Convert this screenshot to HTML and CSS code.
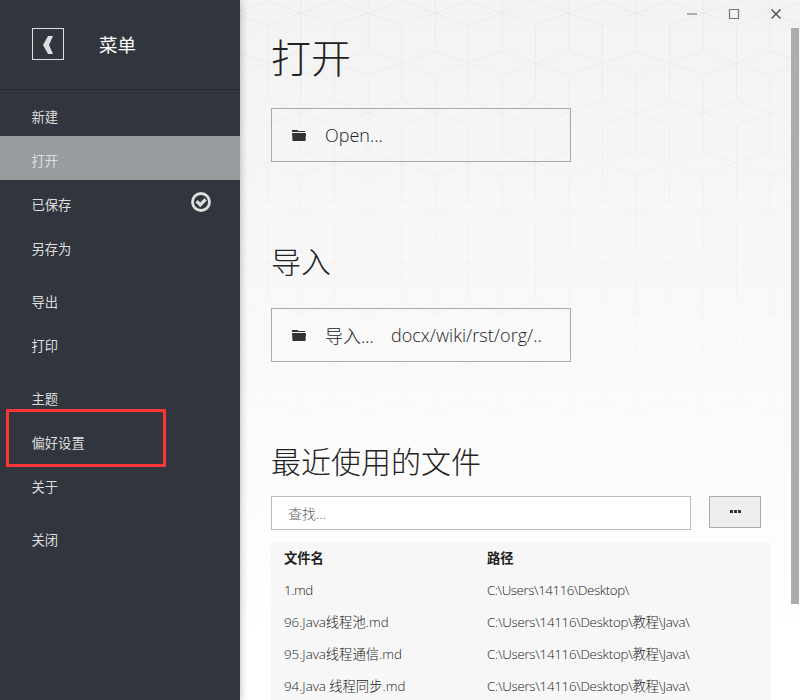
FILE: index.html
```
<!DOCTYPE html>
<html lang="zh-CN">
<head>
    <meta charset="UTF-8">
    <meta name="viewport" content="width=device-width, initial-scale=1.0">
    <title>打开</title>
    <link rel="stylesheet" href="styles.css">
</head>
<body>
    <div class="app">
        <nav class="sidebar">
            <div class="sidebar-header">
                <button class="back" aria-label="返回">
                    <svg width="30" height="30" viewBox="0 0 30 30"><path d="M15 7h5l-4 9 4 9h-5L10 16z" fill="#dedede"/></svg>
                </button>
                <span class="sidebar-title">菜单</span>
            </div>
            <ul class="menu">
                <li>新建</li>
                <li class="active">打开</li>
                <li>已保存
                    <svg class="saved" width="20" height="20" viewBox="0 0 20 20" fill="none" stroke="#dedede">
                        <circle cx="10" cy="10" r="8.500" stroke-width="2.800"/>
                        <path d="M5.600 9.200l3.600 3.600 5.400-5.400" stroke-width="3.300"/>
                    </svg>
                </li>
                <li>另存为</li>
                <li class="divider"></li>
                <li>导出</li>
                <li>打印</li>
                <li class="divider"></li>
                <li>主题</li>
                <li>偏好设置</li>
                <li>关于</li>
                <li class="divider"></li>
                <li>关闭</li>
            </ul>
            <div class="highlight"></div>
        </nav>

        <main class="content">
            <!-- cube pattern behind the page -->
            <svg class="pattern" width="560" height="700">
                <defs>
                    <pattern id="cubes" x="-6" y="0" width="67" height="100" patternUnits="userSpaceOnUse">
                        <path d="M0 13L33.500 1 67 13 33.500 25zM0 51L33.500 63 0 75M67 51L33.500 63 67 75M33.500 25V63M33.500 63V100M0 13V51M67 13V51M0 75V100M67 75V100M0 0V13M67 0V13" fill="none" stroke="#eaeaea" stroke-width="1"/>
                    </pattern>
                    <linearGradient id="fade" x1="0" y1="0" x2="0" y2="1">
                        <stop offset="0" stop-color="#fff" stop-opacity="0"/>
                        <stop offset="0.900" stop-color="#fff"/>
                    </linearGradient>
                </defs>
                <rect width="560" height="700" fill="#f3f3f3"/>
                <rect width="560" height="700" fill="url(#cubes)"/>
                <rect width="560" height="700" fill="url(#fade)"/>
            </svg>

            <div class="window-controls">
                <svg width="12" height="12" viewBox="0 0 12 12"><path d="M1 6h10" stroke="#888" stroke-width="1.300"/></svg>
                <svg width="12" height="12" viewBox="0 0 12 12"><path d="M1.500 1.500h9v9h-9z" fill="none" stroke="#777" stroke-width="1.200"/></svg>
                <svg width="12" height="12" viewBox="0 0 12 12"><path d="M1.500 1.500l9 9M10.500 1.500l-9 9" stroke="#444" stroke-width="1.300"/></svg>
            </div>

            <div class="panel">
                <h1>打开</h1>
                <button class="open-button">
                    <svg width="14" height="12" viewBox="0 0 14 12"><path d="M0 1h5.500l1 1H13v1H0zM0 4h14l-.5 8H.5z" fill="#333"/></svg>
                    <span>Open...</span>
                </button>

                <h2>导入</h2>
                <button class="open-button">
                    <svg width="14" height="12" viewBox="0 0 14 12"><path d="M0 1h5.500l1 1H13v1H0zM0 4h14l-.5 8H.5z" fill="#333"/></svg>
                    <span>导入...</span>
                    <span class="formats">docx/wiki/rst/org/..</span>
                </button>

                <h2>最近使用的文件</h2>
                <div class="search-row">
                    <input type="text" placeholder="查找...">
                    <button class="more" aria-label="更多">
                        <svg width="11" height="3" viewBox="0 0 11 3"><path d="M0 0h3v3H0zM4 0h3v3H4zM8 0h3v3H8z" fill="#333"/></svg>
                    </button>
                </div>

                <table class="files">
                    <thead>
                        <tr><th>文件名</th><th>路径</th></tr>
                    </thead>
                    <tbody>
                        <tr><td>1.md</td><td>C:\Users\14116\Desktop\</td></tr>
                        <tr><td>96.Java线程池.md</td><td>C:\Users\14116\Desktop\教程\Java\</td></tr>
                        <tr><td>95.Java线程通信.md</td><td>C:\Users\14116\Desktop\教程\Java\</td></tr>
                        <tr><td>94.Java 线程同步.md</td><td>C:\Users\14116\Desktop\教程\Java\</td></tr>
                    </tbody>
                </table>
            </div>
            <div class="scrollbar"></div>
        </main>
    </div>
</body>
</html>
```
FILE: styles.css
```
* {
    box-sizing: border-box;
}
body {
    margin: 0;
    font-family: "Open Sans", "Noto Sans CJK SC", sans-serif;
    font-weight: 300;
    color: #222;
}
button {
    font: inherit;
    color: inherit;
    padding: 0;
}
svg {
    display: block;
    flex: none;
}
.app {
    display: flex;
    width: 800px;
    height: 700px;
    overflow: hidden;
}
.sidebar {
    position: relative;
    z-index: 1;
    width: 240px;
    flex: none;
    background-color: #31353d;
    color: #dedede;
    box-shadow: 0 0 8px rgba(0, 0, 0, 0.3);
}
.sidebar-header {
    display: flex;
    align-items: center;
    height: 90px;
    padding: 0 32px 1px;
    border-bottom: 1px solid #282b32;
}
.back {
    width: 32px;
    height: 32px;
    border: 1px solid #dedede;
    background: none;
}
.sidebar-title {
    margin-left: 35px;
    font-size: 18.5px;
    font-weight: 400;
    color: #fff;
}
.menu {
    list-style: none;
    margin: 0;
    padding: 2px 0 0;
    font-size: 13.3px;
    font-weight: 400;
}
.menu li {
    display: flex;
    justify-content: space-between;
    height: 44px;
    padding: 3px 29px 0 31.5px;
    line-height: 44px;
}
.menu .active {
    background-color: #999c9e;
}
.menu .divider {
    height: 9px;
}
.saved {
    margin-top: 9px;
}
.highlight {
    position: absolute;
    left: 6px;
    top: 409px;
    width: 160px;
    height: 58px;
    border: 3px solid #fb3636;
}
.content {
    position: relative;
    flex: 1;
}
.pattern {
    position: absolute;
    left: 0;
    top: 0;
}
.window-controls {
    position: absolute;
    top: 8px;
    right: 18px;
    display: flex;
    gap: 30px;
}
.panel {
    position: relative;
    width: 531px;
    padding: 28px 0 0 31px;
}
h1, h2 {
    margin: 0;
    font-weight: 300;
}
h1 {
    height: 80px;
    font-size: 40px;
    line-height: 60px;
}
h2 {
    height: 60px;
    font-size: 30px;
    line-height: 28px;
}
.open-button {
    display: flex;
    align-items: center;
    width: 300px;
    height: 54px;
    margin-bottom: 86px;
    padding-left: 20px;
    border: 1px solid #a9a9a9;
    background: none;
    font-size: 18px;
    white-space: nowrap;
}
.open-button span {
    margin-left: 19px;
}
.open-button .formats {
    margin-left: 17px;
    letter-spacing: 0.05px;
}
.panel h2:last-of-type {
    height: 48px;
}
.search-row {
    display: flex;
    justify-content: space-between;
    width: 490px;
}
.search-row input {
    width: 420px;
    height: 34px;
    padding: 0 16px;
    border: 1px solid #bbb;
    background-color: #fff;
    font: inherit;
    font-size: 14px;
    outline: none;
}
.search-row input::placeholder {
    color: #606060;
}
.more {
    display: flex;
    align-items: center;
    justify-content: center;
    width: 52px;
    height: 32px;
    padding-bottom: 1px;
    border: 1px solid #aaa;
    background-color: #eee;
}
.files {
    width: 500px;
    margin-top: 12px;
    border-collapse: collapse;
    table-layout: fixed;
    background-color: #f7f7f7;
    font-size: 13.3px;
    white-space: nowrap;
}
.files th, .files td {
    height: 32px;
    padding: 0 0 2px 13px;
    text-align: left;
}
.files th:first-child {
    width: 203px;
}
.files th {
    font-weight: 700;
}
.files td:last-child {
    letter-spacing: -0.26px;
}
.files tbody tr:first-child td {
    padding-bottom: 0;
    letter-spacing: -0.42px;
}
.scrollbar {
    position: absolute;
    top: 28px;
    right: 1px;
    width: 8px;
    height: 576px;
    background-color: #acacac;
}
```
